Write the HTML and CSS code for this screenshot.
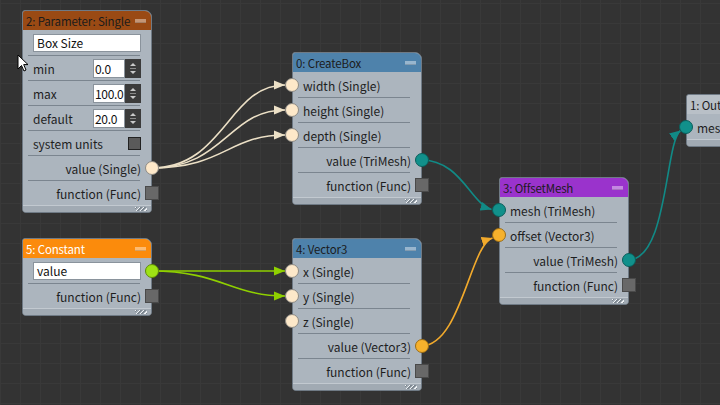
FILE: index.html
```html
<!DOCTYPE html>
<html>
<head>
<meta charset="utf-8">
<link rel="stylesheet" href="styles.css">
</head>
<body>
<div class="canvas">
  <svg class="wires" width="720" height="405" viewBox="0 0 720 405">
    <defs>
      <marker id="aCream" markerUnits="userSpaceOnUse" markerWidth="12" markerHeight="10" refX="11" refY="5" orient="auto"><path d="M0 0.5 L11 5 L0 9.5 Z" fill="#ece0c6"/></marker>
      <marker id="aGreen" markerUnits="userSpaceOnUse" markerWidth="12" markerHeight="10" refX="11" refY="5" orient="auto"><path d="M0 0.5 L11 5 L0 9.5 Z" fill="#8fd000"/></marker>
      <marker id="aTeal" markerUnits="userSpaceOnUse" markerWidth="12" markerHeight="10" refX="11" refY="5" orient="auto"><path d="M0 0.5 L11 5 L0 9.5 Z" fill="#118a86"/></marker>
      <marker id="aOrange" markerUnits="userSpaceOnUse" markerWidth="12" markerHeight="10" refX="11" refY="5" orient="auto"><path d="M0 0.5 L11 5 L0 9.5 Z" fill="#f2aa2c"/></marker>
    </defs>
    <g fill="none" stroke-width="1.6">
      <path class="w-cream" d="M151 168 C 225 168, 228 85, 285 85" marker-end="url(#aCream)"/>
      <path class="w-cream" d="M151 168 C 225 168, 228 110, 285 110" marker-end="url(#aCream)"/>
      <path class="w-cream" d="M151 168 C 225 168, 228 135, 285 135" marker-end="url(#aCream)"/>
      <path class="w-green" d="M151 271 C 221 271, 231 271, 285 271" marker-end="url(#aGreen)"/>
      <path class="w-green" d="M151 271 C 221 271, 231 296, 285 296" marker-end="url(#aGreen)"/>
      <path class="w-teal" d="M421 160 C 461 160, 470 203, 491.5 209.5" marker-end="url(#aTeal)"/>
      <path class="w-orange" d="M421 346 C 461 346, 470 245, 492.5 238" marker-end="url(#aOrange)"/>
      <path class="w-teal" d="M628 260 C 668 260, 665 142, 680.5 130.5" marker-end="url(#aTeal)"/>
    </g>
  </svg>

  <div class="node n2">
    <div class="title t-brown"><span>2: Parameter: Single</span><i class="min"></i></div>
    <div class="body">
      <div class="row"><div class="text-input">Box Size</div></div>
      <div class="row field"><span>min</span><div class="num"><span class="num-val">0.0</span><svg class="spin" width="16" height="19" viewBox="0 0 16 19"><rect width="16" height="19" fill="#3b3b3b"/><path d="M5 7 L8 4 L11 7 Z" fill="#c9c9c9"/><path d="M5 12 L8 15 L11 12 Z" fill="#c9c9c9"/><line x1="5" y1="9.5" x2="11" y2="9.5" stroke="#8a8a8a" stroke-width="1"/></svg></div></div>
      <div class="row field"><span>max</span><div class="num"><span class="num-val">100.0</span><svg class="spin" width="16" height="19" viewBox="0 0 16 19"><rect width="16" height="19" fill="#3b3b3b"/><path d="M5 7 L8 4 L11 7 Z" fill="#c9c9c9"/><path d="M5 12 L8 15 L11 12 Z" fill="#c9c9c9"/><line x1="5" y1="9.5" x2="11" y2="9.5" stroke="#8a8a8a" stroke-width="1"/></svg></div></div>
      <div class="row field"><span>default</span><div class="num"><span class="num-val">20.0</span><svg class="spin" width="16" height="19" viewBox="0 0 16 19"><rect width="16" height="19" fill="#3b3b3b"/><path d="M5 7 L8 4 L11 7 Z" fill="#c9c9c9"/><path d="M5 12 L8 15 L11 12 Z" fill="#c9c9c9"/><line x1="5" y1="9.5" x2="11" y2="9.5" stroke="#8a8a8a" stroke-width="1"/></svg></div></div>
      <div class="row field"><span>system units</span><i class="check"></i></div>
      <div class="row out"><span>value (Single)</span><i class="port r p-cream"></i></div>
      <div class="row out"><span>function (Func)</span><i class="port r sq"></i></div>
    </div>
    <div class="foot"><i class="grip"></i></div>
  </div>

  <div class="node n0">
    <div class="title t-blue"><span>0: CreateBox</span><i class="min"></i></div>
    <div class="body">
      <div class="row"><i class="port l p-cream"></i><span>width (Single)</span></div>
      <div class="row"><i class="port l p-cream"></i><span>height (Single)</span></div>
      <div class="row"><i class="port l p-cream"></i><span>depth (Single)</span></div>
      <div class="row out"><span>value (TriMesh)</span><i class="port r p-teal"></i></div>
      <div class="row out"><span>function (Func)</span><i class="port r sq"></i></div>
    </div>
    <div class="foot"><i class="grip"></i></div>
  </div>

  <div class="node n5">
    <div class="title t-orange"><span>5: Constant</span><i class="min"></i></div>
    <div class="body">
      <div class="row"><div class="text-input">value</div><i class="port r p-green"></i></div>
      <div class="row out"><span>function (Func)</span><i class="port r sq"></i></div>
    </div>
    <div class="foot"><i class="grip"></i></div>
  </div>

  <div class="node n4">
    <div class="title t-blue"><span>4: Vector3</span><i class="min"></i></div>
    <div class="body">
      <div class="row"><i class="port l p-cream"></i><span>x (Single)</span></div>
      <div class="row"><i class="port l p-cream"></i><span>y (Single)</span></div>
      <div class="row"><i class="port l p-cream"></i><span>z (Single)</span></div>
      <div class="row out"><span>value (Vector3)</span><i class="port r p-orange"></i></div>
      <div class="row out"><span>function (Func)</span><i class="port r sq"></i></div>
    </div>
    <div class="foot"><i class="grip"></i></div>
  </div>

  <div class="node n3">
    <div class="title t-purple"><span>3: OffsetMesh</span><i class="min"></i></div>
    <div class="body">
      <div class="row"><i class="port l p-teal"></i><span>mesh (TriMesh)</span></div>
      <div class="row"><i class="port l p-orange"></i><span>offset (Vector3)</span></div>
      <div class="row out"><span>value (TriMesh)</span><i class="port r p-teal"></i></div>
      <div class="row out"><span>function (Func)</span><i class="port r sq"></i></div>
    </div>
    <div class="foot"><i class="grip"></i></div>
  </div>

  <div class="node n1">
    <div class="title t-gray"><span>1: Output</span></div>
    <div class="body">
      <div class="row"><i class="port l p-teal"></i><span>mesh (TriMesh)</span></div>
    </div>
    <div class="foot"></div>
  </div>

  <svg class="cursor" width="13" height="19" viewBox="0 0 13 19"><path d="M1 1 L1 15 L4.5 11.5 L7 17 L9 16 L6.7 10.6 L11 10.6 Z" fill="#ffffff" stroke="#000000" stroke-width="1" stroke-linejoin="round"/></svg>
</div>
</body>
</html>
```
FILE: styles.css
```css
html, body {
  margin: 0;
  padding: 0;
}
body {
  width: 720px;
  height: 405px;
  overflow: hidden;
  background: #323232;
  font-family: "Noto Sans CJK JP", "Noto Sans", sans-serif;
}
.canvas {
  position: relative;
  width: 720px;
  height: 405px;
  overflow: hidden;
  background-color: #333333;
  background-image:
    linear-gradient(#393939 1px, transparent 1px),
    linear-gradient(90deg, #393939 1px, transparent 1px);
  background-size: 20px 20px;
  background-position: 0 3px;
}
.wires {
  position: absolute;
  left: 0;
  top: 0;
}
.w-cream { stroke: #ece0c6; }
.w-green { stroke: #8fd000; }
.w-teal { stroke: #118a86; }
.w-orange { stroke: #f2aa2c; }

.node {
  position: absolute;
  width: 130px;
  box-sizing: border-box;
  border: 1px solid #6f7a85;
  border-radius: 3px 7px 4px 4px;
  background: #acb5be;
  z-index: 1;
}
.n2 { left: 22px; top: 10px; }
.n0 { left: 292px; top: 52px; }
.n5 { left: 22px; top: 238px; }
.n4 { left: 292px; top: 238px; }
.n3 { left: 499px; top: 177px; }
.n1 { left: 686px; top: 94px; width: 80px; }

.title {
  height: 19px;
  display: flex;
  align-items: center;
  justify-content: space-between;
  padding: 0 5px 0 3px;
  font-size: 11.5px;
  letter-spacing: -0.15px;
  color: #1b1b1b;
  border-radius: 2px 6px 0 0;
  white-space: nowrap;
  overflow: hidden;
}
.t-brown { background: #9a4a14; }
.t-blue { background: #4e82ab; }
.t-orange { background: #fb8b0c; color: #ffffff; }
.t-purple { background: #9a33cc; }
.t-gray { background: #b9c0c7; }
.min {
  display: block;
  flex: none;
  width: 11px;
  height: 3px;
  background: rgba(255, 255, 255, 0.42);
  border-bottom: 1px solid rgba(0, 0, 0, 0.15);
}

.body {
  padding-top: 1px;
}
.row {
  position: relative;
  height: 24px;
  display: flex;
  align-items: center;
  padding: 0 10px;
  font-size: 12px;
  color: #1e1e1e;
  white-space: nowrap;
}
.row + .row {
  margin-top: 1px;
}
.row + .row::before {
  content: "";
  position: absolute;
  left: 5px;
  right: 11px;
  top: -1px;
  height: 1px;
  background: #7b858f;
}
.row.out {
  justify-content: flex-end;
}
.row.field {
  justify-content: space-between;
}

.text-input {
  flex: 1;
  height: 18px;
  box-sizing: border-box;
  background: #ffffff;
  border: 1px solid #8a939c;
  padding-left: 3px;
  line-height: 16px;
  font-size: 12px;
  color: #111;
}
.num {
  display: flex;
  align-items: center;
}
.num-val {
  width: 32px;
  height: 19px;
  box-sizing: border-box;
  background: #ffffff;
  border: 1px solid #8a939c;
  padding-left: 1px;
  line-height: 17px;
  font-size: 12px;
  color: #111;
  overflow: hidden;
  letter-spacing: -0.3px;
}
.spin {
  display: block;
}
.check {
  display: block;
  width: 13px;
  height: 13px;
  box-sizing: border-box;
  background: #5a5a5a;
  border: 1px solid #222;
}

.port {
  position: absolute;
  top: 5px;
  width: 14px;
  height: 14px;
  box-sizing: border-box;
  border-radius: 50%;
  border: 1px solid #707070;
  z-index: 2;
}
.port.l { left: -8px; }
.port.r { right: -8px; }
.p-cream { background: #fde8c9; border-color: #8d8a84; }
.p-teal { background: #11908b; border-color: #0a5e5b; }
.p-orange { background: #f6b12c; border-color: #9a6c16; }
.p-green { background: #9ee214; border-color: #5e8a08; }
.sq {
  border-radius: 0;
  background: #686868;
  border-color: #4a4a4a;
}

.foot {
  position: relative;
  height: 7px;
  box-sizing: border-box;
  border-top: 1px solid #c2c9d0;
  background: #a1aab3;
  border-radius: 0 0 3px 3px;
}
.grip {
  position: absolute;
  right: 4px;
  bottom: 1px;
  width: 12px;
  height: 4px;
  background: repeating-linear-gradient(135deg, #eef1f4 0 1px, #7d8790 1px 2px, transparent 2px 3px);
}

.cursor {
  position: absolute;
  left: 17px;
  top: 54px;
  z-index: 5;
}
```
